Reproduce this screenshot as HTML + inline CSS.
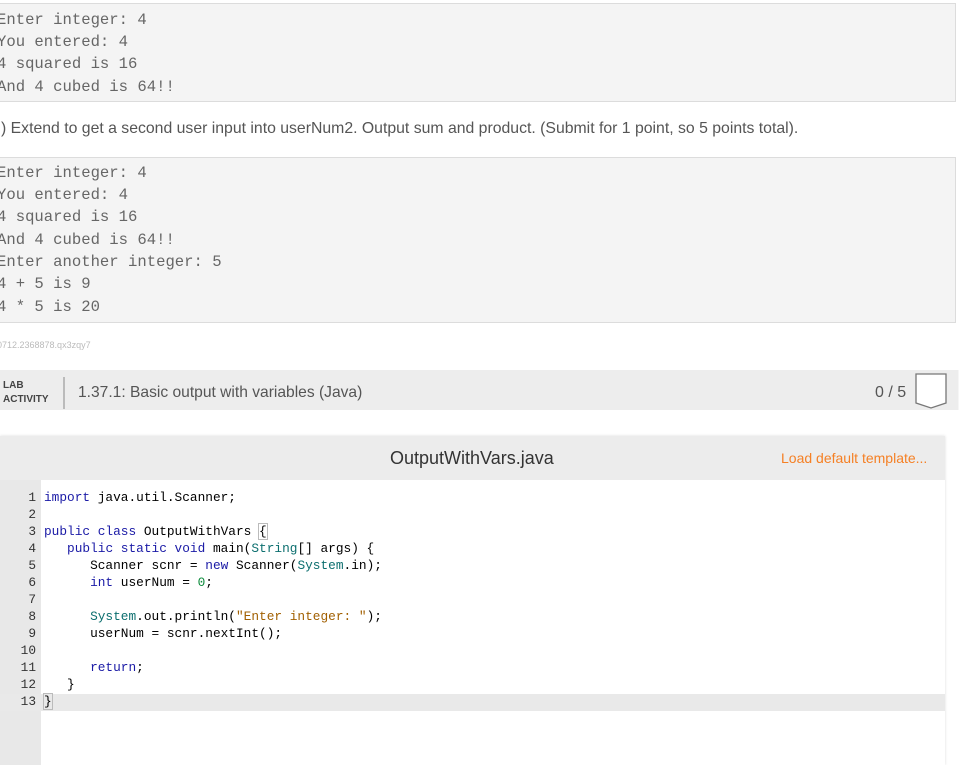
<!DOCTYPE html>
<html><head><style>
body{margin:0;width:963px;height:765px;overflow:hidden;background:#fff;font-family:"Liberation Sans",sans-serif;position:relative}
.out{position:absolute;left:-1px;width:957px;background:#f4f4f4;border:1px solid #dcdcdc;font-family:"Liberation Mono",monospace;font-size:15.6px;color:#666;box-sizing:border-box}
.out div{position:absolute;left:-3px;white-space:pre;line-height:20px}
.p{position:absolute;left:1px;top:120px;font-size:15.8px;color:#555;white-space:pre}
.small{position:absolute;left:-3px;top:340px;font-size:9px;color:#bbb}
.lab{position:absolute;left:0;top:370px;width:958px;height:40px;background:#ededed;border-right:1px solid #f6f6f6}
.lab .l{position:absolute;left:3px;top:9px;font-size:10px;font-weight:bold;color:#444;line-height:14px}
.lab .bar{position:absolute;left:63px;top:7px;width:2px;height:32px;background:#bbb}
.lab .t{position:absolute;left:78px;top:14px;font-size:15.6px;color:#555}
.lab .s{position:absolute;left:875px;top:14px;font-size:16px;color:#555}
.panel{position:absolute;left:0;top:436px;width:945px;height:329px;background:#fff;box-shadow:0 0 3px #ddd}
.ph{height:44px;background:#ececec;position:relative}
.ph .f{position:absolute;left:390px;top:12px;font-size:18px;color:#333}
.ph .ld{position:absolute;left:781px;top:14px;font-size:14px;color:#f58025}
.gut{position:absolute;left:0;top:44px;width:41px;height:285px;background:#e8e8e8}
.code{position:absolute;left:0;top:53px;font-family:"Liberation Mono",monospace;font-size:12.8px;line-height:17px;color:#000}
.code div{white-space:pre;height:17px}
.n{display:inline-block;width:36px;text-align:right;color:#333;margin-right:8px}
.k{color:#1a1aa6}.c{color:#0b6e6e}.s2{color:#a15f00}.g{color:#0a8a3a}
.hl{position:absolute;left:0;top:258px;width:945px;height:17px;background:#e9e9e9}
</style></head><body>
<div class="out" style="top:3px;height:99px">
<div style="top:6px">Enter integer: 4</div>
<div style="top:28px">You entered: 4</div>
<div style="top:50px">4 squared is 16</div>
<div style="top:73px">And 4 cubed is 64!!</div>
</div>
<div class="p">) Extend to get a second user input into userNum2. Output sum and product. (Submit for 1 point, so 5 points total).</div>
<div class="out" style="top:157px;height:166px">
<div style="top:5px">Enter integer: 4</div>
<div style="top:27px">You entered: 4</div>
<div style="top:49px">4 squared is 16</div>
<div style="top:72px">And 4 cubed is 64!!</div>
<div style="top:94px">Enter another integer: 5</div>
<div style="top:116px">4 + 5 is 9</div>
<div style="top:139px">4 * 5 is 20</div>
</div>
<div class="small">0712.2368878.qx3zqy7</div>
<div class="lab"><div class="l">LAB<br>ACTIVITY</div><div class="bar"></div><div class="t">1.37.1: Basic output with variables (Java)</div><div class="s">0 / 5</div>
<svg style="position:absolute;left:915px;top:3px" width="34" height="38"><path d="M1 1H31V30L16 35L1 30Z" fill="#fff" stroke="#777" stroke-width="1.3"/></svg></div>
<div class="panel"><div class="ph"><div class="f">OutputWithVars.java</div><div class="ld">Load default template...</div></div>
<div class="gut"></div><div class="hl"></div>
<div class="code">
<div><span class="n">1</span><span class="k">import</span> java.util.Scanner;</div>
<div><span class="n">2</span></div>
<div><span class="n">3</span><span class="k">public class</span> OutputWithVars <span style="outline:1px solid #bbb">{</span></div>
<div><span class="n">4</span>   <span class="k">public static void</span> main(<span class="c">String</span>[] args) {</div>
<div><span class="n">5</span>      Scanner scnr = <span class="k">new</span> Scanner(<span class="c">System</span>.in);</div>
<div><span class="n">6</span>      <span class="k">int</span> userNum = <span class="g">0</span>;</div>
<div><span class="n">7</span></div>
<div><span class="n">8</span>      <span class="c">System</span>.out.println(<span class="s2">"Enter integer: "</span>);</div>
<div><span class="n">9</span>      userNum = scnr.nextInt();</div>
<div><span class="n">10</span></div>
<div><span class="n">11</span>      <span class="k">return</span>;</div>
<div><span class="n">12</span>   }</div>
<div><span class="n">13</span><span style="outline:1px solid #bbb">}</span></div>
</div></div>
</body></html>
